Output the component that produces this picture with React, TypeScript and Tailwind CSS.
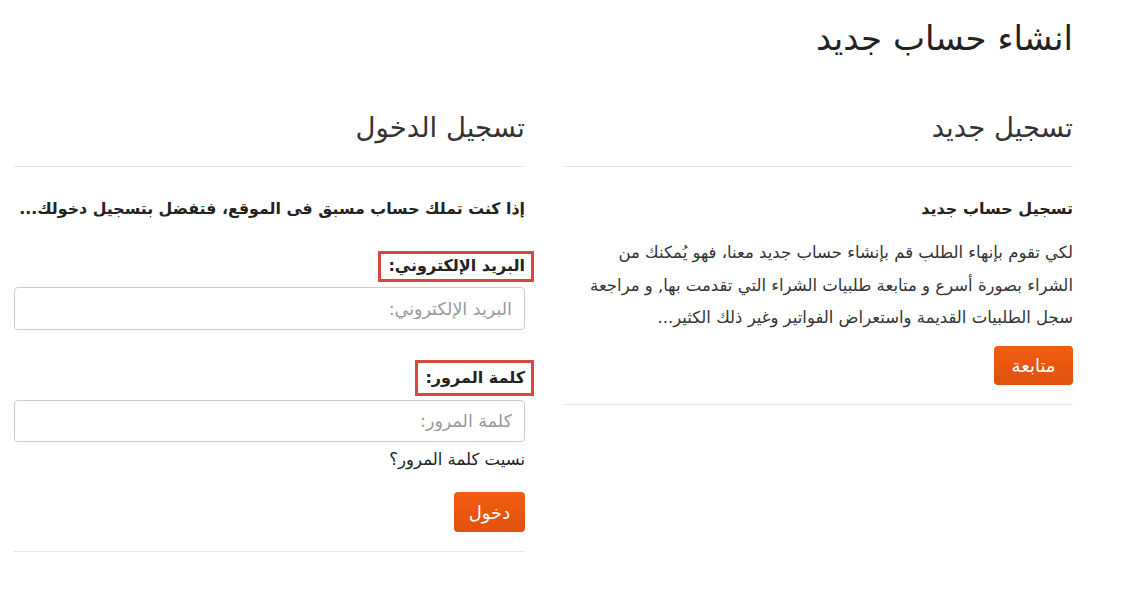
export default function App() {
  const font = { fontFamily: '"DejaVu Sans", "Noto Sans", sans-serif' };

  return (
    <div dir="rtl" className="min-h-screen bg-white text-[#333]" style={font}>
      <div className="w-[1059px] ml-[14px] mr-auto">
        {/* ── Page title ── */}
        <h1 className="pt-[15px] text-[34px] leading-[46px] text-[#222] font-normal">انشاء حساب جديد</h1>

        <div className="mt-[48px] flex gap-[38px] items-start">
          {/* ── Register column ── */}
          <section className="w-[510px]">
            <h2 className="text-[27.5px] leading-[37px] text-[#333] font-normal">تسجيل جديد</h2>
            <hr className="mt-[20px] border-t border-[#e5e5e5]" />
            <p className="mt-[31px] text-[16px] leading-[22px] font-bold text-[#222]">تسجيل حساب جديد</p>
            <p className="mt-[17px] text-[16.5px] leading-[32.5px] text-[#333] whitespace-nowrap">
              لكي تقوم بإنهاء الطلب قم بإنشاء حساب جديد معنا، فهو يُمكنك من
              <br />
              الشراء بصورة أسرع و متابعة طلبيات الشراء التي تقدمت بها, و مراجعة
              <br />
              سجل الطلبيات القديمة واستعراض الفواتير وغير ذلك الكثير...
            </p>
            <button className="mt-[11px] h-[39px] w-[79px] rounded-[4px] bg-gradient-to-b from-[#f45c10] to-[#dd520d] text-white text-[18px]">
              متابعة
            </button>
            <hr className="mt-[19px] border-t border-[#e5e5e5]" />
          </section>

          {/* ── Login column ── */}
          <section className="w-[511px]">
            <h2 className="text-[27.5px] leading-[37px] text-[#333] font-normal">تسجيل الدخول</h2>
            <hr className="mt-[20px] border-t border-[#e5e5e5]" />
            <p className="mt-[31px] text-[15.8px] leading-[22px] font-bold text-[#222] whitespace-nowrap">
              إذا كنت تملك حساب مسبق فى الموقع، فتفضل بتسجيل دخولك...
            </p>

            <div className="mt-[31px]">
              <label className="-mr-[9px] inline-block border-[3px] border-[#d9473f] pr-[6px] pl-[7px] h-[31px] leading-[24px] text-[16px] font-bold text-[#222]">
                البريد الإلكتروني:
              </label>
              <input
                placeholder="البريد الإلكتروني:"
                className="mt-[5px] block w-full h-[43px] rounded-[4px] border border-[#cccccc] px-[12px] text-[17.5px] placeholder:text-[#999] outline-none"
              />
            </div>

            <div className="mt-[30px]">
              <label className="-mr-[9px] inline-block border-[3px] border-[#d9473f] pr-[6px] pl-[7px] h-[36px] leading-[29px] text-[16px] font-bold text-[#222]">
                كلمة المرور:
              </label>
              <input
                type="text"
                placeholder="كلمة المرور:"
                className="mt-[4px] block w-full h-[42px] rounded-[4px] border border-[#cccccc] px-[12px] text-[17.5px] placeholder:text-[#999] outline-none"
              />
            </div>

            <p className="mt-[6px] text-[16.5px] leading-[24px] text-[#222]">نسيت كلمة المرور؟</p>

            <button className="mt-[20px] h-[40px] w-[71px] rounded-[4px] bg-gradient-to-b from-[#f45c10] to-[#dd520d] text-white text-[18px]">
              دخول
            </button>
            <hr className="mt-[19px] border-t border-[#e5e5e5]" />
          </section>
        </div>
      </div>
    </div>
  );
}
